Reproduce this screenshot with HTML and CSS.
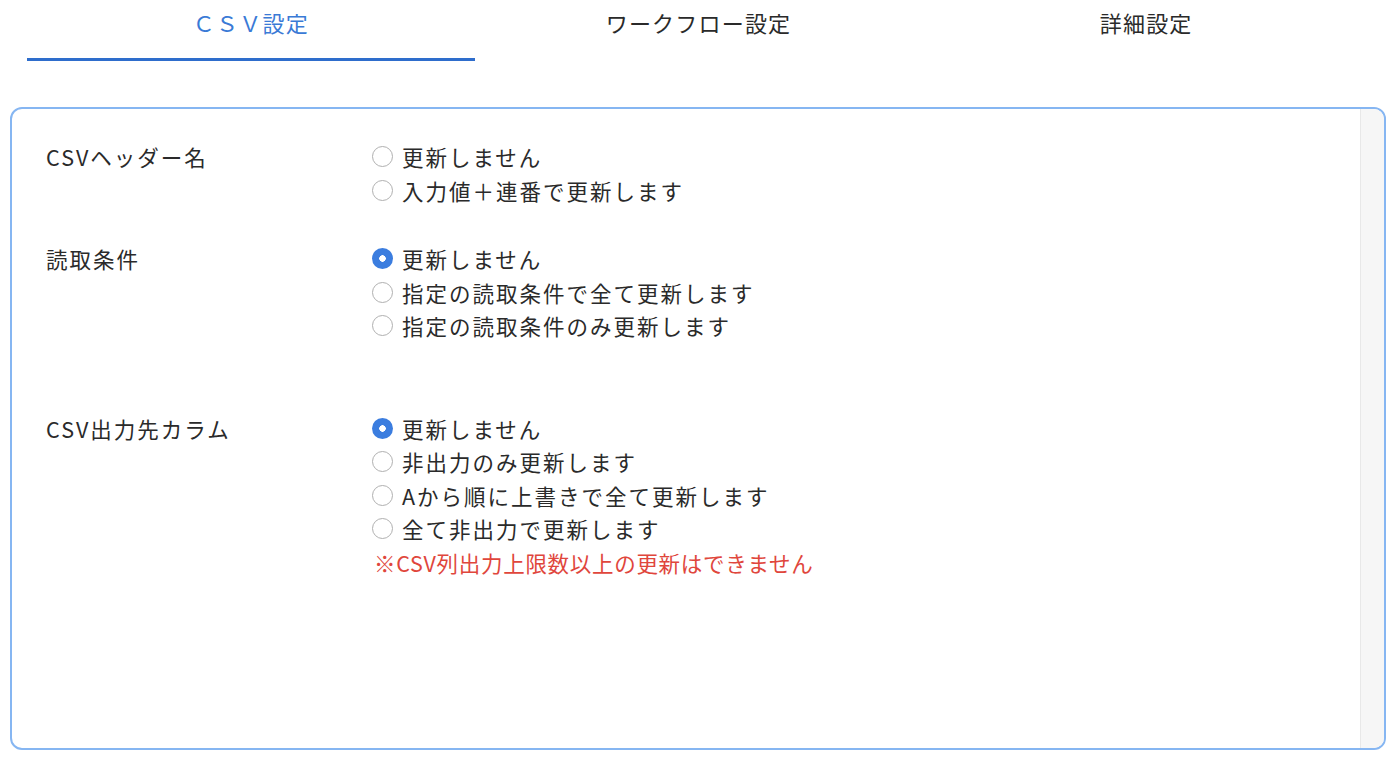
FILE: index.html
```html
<!DOCTYPE html>
<html>
<head>
  <title>CSV設定</title>
  <meta charset="utf-8">
  <link rel="stylesheet" href="styles.css">
</head>
<body>
  <div class="tabs">
    <div class="tab active">ＣＳＶ設定</div>
    <div class="tab">ワークフロー設定</div>
    <div class="tab">詳細設定</div>
  </div>

  <div class="panel">
    <div class="panel-body">
      <div class="section gap-s">
        <div class="label">CSVヘッダー名</div>
        <div class="options">
          <label class="opt"><input type="radio" name="header">更新しません</label>
          <label class="opt"><input type="radio" name="header">入力値＋連番で更新します</label>
        </div>
      </div>

      <div class="section gap-l">
        <div class="label">読取条件</div>
        <div class="options">
          <label class="opt"><input type="radio" name="read" checked>更新しません</label>
          <label class="opt"><input type="radio" name="read">指定の読取条件で全て更新します</label>
          <label class="opt"><input type="radio" name="read">指定の読取条件のみ更新します</label>
        </div>
      </div>

      <div class="section">
        <div class="label">CSV出力先カラム</div>
        <div class="options">
          <label class="opt"><input type="radio" name="col" checked>更新しません</label>
          <label class="opt"><input type="radio" name="col">非出力のみ更新します</label>
          <label class="opt"><input type="radio" name="col">Aから順に上書きで全て更新します</label>
          <label class="opt"><input type="radio" name="col">全て非出力で更新します</label>
          <div class="note">※CSV列出力上限数以上の更新はできません</div>
        </div>
      </div>
    </div>
    <div class="scroll-track"></div>
  </div>
</body>
</html>
```

FILE: styles.css
```css
* {box-sizing: border-box;}
body {margin: 0; font-family: "Noto Sans CJK JP", "Noto Sans", sans-serif; color: #2a2a2a; background: #fff;}

.tabs {display: flex; padding: 0 26px 0 27px;}
.tab {flex: 1; text-align: center; font-size: 22px; letter-spacing: 1.2px; height: 61px; padding-top: 6px; color: #2a2a2a;}
.tab.active {color: #3a7ad6; border-bottom: 3px solid #2e6dcc;}

.panel {display: flex; margin: 46px 10px 0 10px; height: 643px; border: 2px solid #86b6f2; border-radius: 12px; overflow: hidden;}
.panel-body {flex: 1; padding: 31px 0 0 34px;}
.scroll-track {width: 24px; background: #f6f6f6; border-left: 1px solid #e8e8e8;}

.section {display: flex; font-size: 21.5px; letter-spacing: 2px;}
.section.gap-s {margin-bottom: 35px;}
.section.gap-l {margin-bottom: 69px;}
.label {width: 326px; line-height: 33.5px;}
.options {display: flex; flex-direction: column;}
.opt {display: flex; align-items: center; gap: 9px; line-height: 33.5px;}

.opt input {appearance: none; -webkit-appearance: none; width: 21px; height: 21px; margin: 0; border: 1.5px solid #b0b0b0; border-radius: 50%; background: #fff;}
.opt input:checked {border: none; background: radial-gradient(circle, #fff 0 3px, #3b7ddf 3.5px);}

.note {color: #e0463c; letter-spacing: 0.7px; line-height: 33.5px; margin-left: 2px;}
```
